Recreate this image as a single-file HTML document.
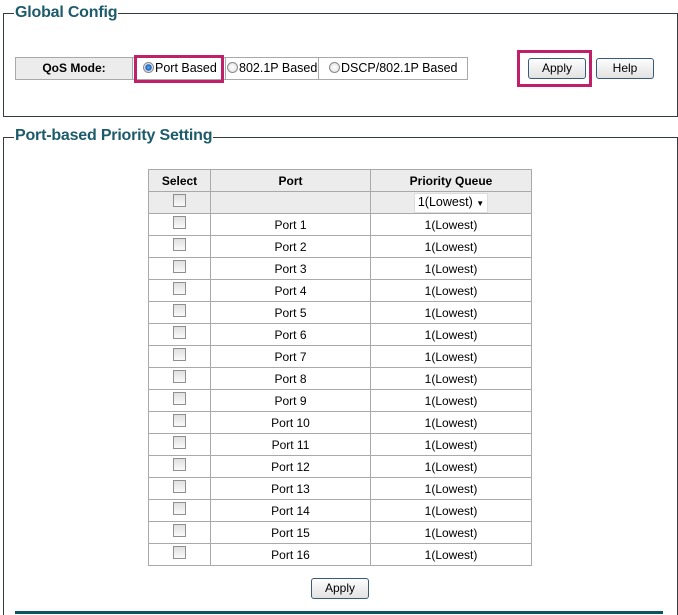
<!DOCTYPE html>
<html><head><meta charset="utf-8"><style>
*{margin:0;padding:0;box-sizing:border-box}
html,body{width:678px;height:615px;overflow:hidden}
body{background:#fff;font-family:"Liberation Sans",Arial,sans-serif;font-size:12px;color:#000;position:relative}
.a{position:absolute}
.box{border:1px solid #333b40}
.title{font-weight:bold;font-size:16px;color:#1d5b6b;background:#fff;padding:0 1px;line-height:18px;letter-spacing:-0.2px}
.btn{border:1px solid #3a5a7a;border-radius:3px;background:linear-gradient(#fdfdfd,#e2e2e2);font-size:12px;text-align:center;line-height:18px}
.mag{border:3px solid #c0206a}
.radio{display:inline-block;width:11px;height:11px;border-radius:50%;border:1px solid #8a8a8a;background:radial-gradient(#fff,#ddd);vertical-align:-1px;margin-right:1px}
.radio.on{background:radial-gradient(#5cb0ff 0,#1560b0 45%,#dde 55%,#eee 100%)}
table{border-collapse:collapse;position:absolute;left:148px;top:169px;width:384px}
td{border:1px solid #a9a9a9;height:22px;text-align:center;font-size:12px;padding:0}
.hd td{background:#ececec;font-weight:bold}
.cb{display:inline-block;width:13px;height:13px;border:1px solid #8f8f8f;background:linear-gradient(#e0e0e0,#fafafa);vertical-align:1px}
</style></head><body>
<div class="a box" style="left:3px;top:13px;width:675px;height:104px"></div>
<div class="a title" style="left:14px;top:4px">Global Config</div>
<div class="a" style="left:15px;top:57px;width:453px;height:23px;border:1px solid #a9a9a9"></div>
<div class="a" style="left:16px;top:58px;width:117px;height:21px;background:#ececec;border-right:1px solid #a9a9a9;font-weight:bold;text-align:center;line-height:21px">QoS Mode:</div>
<div class="a" style="left:225px;top:58px;width:1px;height:21px;background:#a9a9a9"></div>
<div class="a" style="left:318px;top:58px;width:1px;height:21px;background:#a9a9a9"></div>
<div class="a" style="left:143px;top:58px;line-height:21px;font-size:12.5px"><span class="radio on"></span>Port Based</div>
<div class="a" style="left:227px;top:58px;line-height:21px;font-size:12.5px"><span class="radio"></span>802.1P Based</div>
<div class="a" style="left:329px;top:58px;line-height:21px;font-size:12.5px"><span class="radio"></span>DSCP/802.1P Based</div>
<div class="a mag" style="left:134px;top:55px;width:90px;height:28px"></div>
<div class="a btn" style="left:528px;top:58px;width:58px;height:21px">Apply</div>
<div class="a mag" style="left:517px;top:50px;width:75px;height:37px"></div>
<div class="a btn" style="left:596px;top:58px;width:58px;height:21px">Help</div>

<div class="a box" style="left:3px;top:137px;width:675px;height:478px;border-bottom:none"></div>
<div class="a title" style="left:14px;top:127px">Port-based Priority Setting</div>
<table id="t">
<tr class="hd"><td style="width:62px">Select</td><td style="width:160px">Port</td><td>Priority Queue</td></tr>
<tr class="hd"><td><span class="cb"></span></td><td></td><td style="font-weight:normal"><span style="display:inline-block;background:#fff;border:1px solid #ddd;padding:0 3px;line-height:16px;font-size:12.5px">1(Lowest) <span style="font-size:8px">&#9660;</span></span></td></tr>
</table>
<script>
var t=document.getElementById('t');
for(var i=1;i<=16;i++){var r=t.insertRow();r.innerHTML='<td><span class="cb"></span></td><td>Port '+i+'</td><td>1(Lowest)</td>';}
</script>
<div class="a btn" style="left:311px;top:578px;width:58px;height:21px">Apply</div>
<div class="a" style="left:15px;top:611px;width:648px;height:3px;background:#0b5560"></div>
</body></html>
